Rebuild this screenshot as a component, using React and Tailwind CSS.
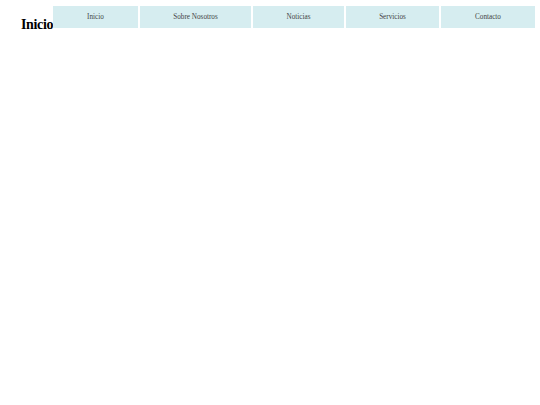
import React from 'react';

const links = [
  { label: 'Inicio', w: 'w-[85px]' },
  { label: 'Sobre Nosotros', w: 'w-[111px]' },
  { label: 'Noticias', w: 'w-[91px]' },
  { label: 'Servicios', w: 'w-[93px]' },
  { label: 'Contacto', w: 'w-[94px]' },
];

const App = () => {
  return (
    <div className="min-h-[405px] bg-white font-['Liberation_Serif',serif] text-black">
      {/* Header */}
      <div className="flex items-start pl-[21px] pt-[6px]">
        <h1 className="mt-[11px] w-[32px] text-[14px] leading-[15px] font-bold tracking-[-0.35px] whitespace-nowrap">Inicio</h1>
        <nav className="flex gap-[2px]">
          {links.map((l) => (
            <a
              key={l.label}
              href="#"
              className={`${l.w} h-[22px] flex items-center justify-center bg-[#d6edf0] text-[7.2px] text-[#444]`}
            >
              {l.label}
            </a>
          ))}
        </nav>
      </div>
    </div>
  );
};

export default App;
